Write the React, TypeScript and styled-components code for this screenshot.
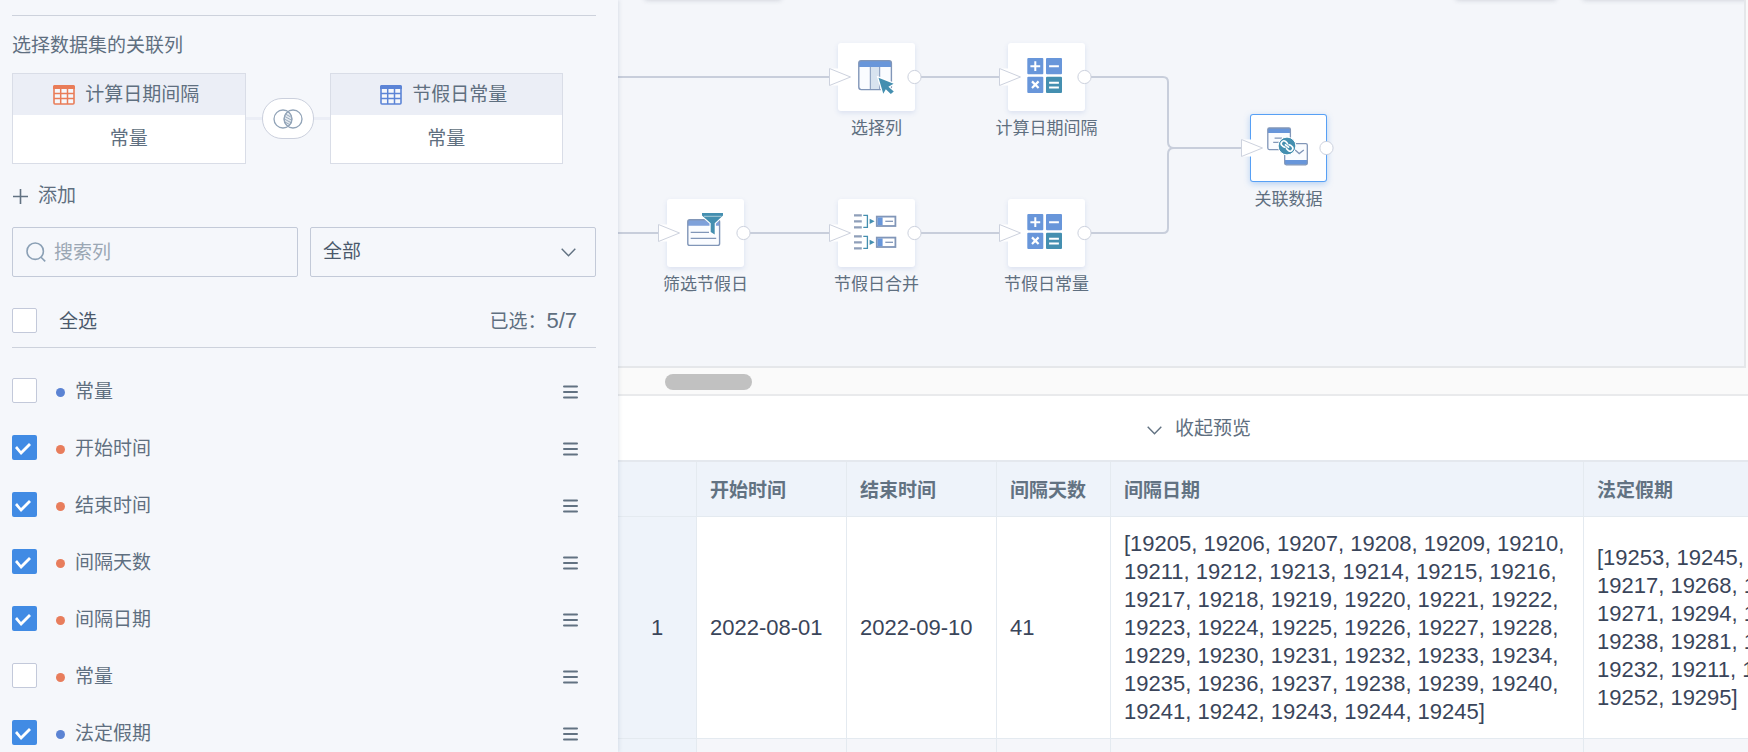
import React, { useState } from "react";
import styled, { createGlobalStyle } from "styled-components";

const GlobalStyle = createGlobalStyle`
  * { box-sizing: border-box; }
  body {
    margin: 0;
    background: #f5f7fb;
    color: #5f6f80;
    font-family: "Liberation Sans", "Noto Sans CJK SC", sans-serif;
    font-size: 19px;
    line-height: 28px;
  }
  button, input, select { font: inherit; color: inherit; }
`;

const Page = styled.div`
  display: flex;
  height: 100vh;
  overflow: hidden;
`;

/* ---------- Side panel ---------- */

const SidePanel = styled.aside`
  position: relative;
  z-index: 1;
  flex: 0 0 618px;
  padding: 15px 22px 0 12px;
  background: #f5f7fb;
  box-shadow: 1px 0 4px rgba(70, 90, 120, 0.14);
`;

const PanelTitle = styled.h2`
  margin: 0 0 13px;
  padding-top: 16px;
  border-top: 1px solid #cdd2dc;
  font-size: 19px;
  line-height: 28px;
  font-weight: 400;
`;

const JoinRow = styled.div`
  display: flex;
  align-items: center;
  padding-right: 33px;
`;

const DataSetCard = styled.section`
  flex: 1;
  min-width: 0;
  border: 1px solid #d9dde7;
  background: #fff;
  text-align: center;
`;

const DataSetHead = styled.header`
  display: flex;
  align-items: center;
  justify-content: center;
  gap: 10px;
  height: 41px;
  padding-right: 5px;
  background: #ebeef6;
`;

const DataSetColumn = styled.div`
  height: 48px;
  line-height: 48px;
`;

const JoinLink = styled.div`
  display: flex;
  flex: 0 0 84px;
  align-items: center;

  &::before,
  &::after {
    content: "";
    flex: 1;
    height: 3px;
    background: #ebeef6;
  }
`;

const JoinButton = styled.button`
  display: flex;
  align-items: center;
  justify-content: center;
  width: 52px;
  height: 41px;
  padding: 0;
  border: 1px solid #cbd0dd;
  border-radius: 20px;
  background: #fff;
`;

const AddButton = styled.button`
  display: flex;
  align-items: center;
  gap: 10px;
  margin: 18px 0 17px;
  padding: 0 0 0 1px;
  border: 0;
  background: none;
`;

const FilterRow = styled.div`
  display: flex;
  gap: 12px;
`;

const Field = styled.div`
  display: flex;
  flex: 1 1 0;
  align-items: center;
  position: relative;
  min-width: 0;
  height: 50px;
  border: 1px solid #c3cad8;
  border-radius: 2px;
`;

const SearchInput = styled.input`
  flex: 1;
  min-width: 0;
  height: 48px;
  padding: 2px 12px 0 8px;
  border: 0;
  outline: 0;
  background: none;

  &::placeholder { color: #9ba7b4; opacity: 1; }
`;

const SearchLabel = styled.label`
  display: flex;
  padding-left: 13px;
`;

const TypeSelect = styled.select`
  flex: 1;
  min-width: 0;
  height: 48px;
  padding: 0 40px 0 12px;
  border: 0;
  outline: 0;
  background: none;
  color: #4b596b;
  appearance: none;
`;

const SelectArrow = styled.span`
  display: flex;
  position: absolute;
  right: 19px;
  pointer-events: none;
`;

const SelectAllRow = styled.div`
  display: flex;
  align-items: center;
  justify-content: space-between;
  height: 54px;
  margin-top: 17px;
  padding-right: 19px;
  border-bottom: 1px solid #cdd2dc;
`;

const SelectAllLabel = styled.label`
  display: flex;
  align-items: center;
  gap: 22px;
  color: #4b596b;
`;

const LabelText = styled.span`
  padding-top: 3px;
`;

const SelectedCount = styled.span`
  padding-top: 2px;

  b { font-size: 22px; font-weight: 400; }
`;

const ColumnList = styled.ul`
  margin: 0;
  padding: 14px 18px 0 0;
  list-style: none;
`;

const ColumnItem = styled.li`
  display: flex;
  align-items: center;
  justify-content: space-between;
  height: 57px;
`;

const ColumnLabel = styled.label`
  display: flex;
  align-items: center;
`;

const Checkbox = styled.input.attrs({ type: "checkbox" })`
  flex: none;
  width: 25px;
  height: 25px;
  margin: 0;
  border: 1px solid #c3c9da;
  border-radius: 2px;
  background: #fff;
  appearance: none;

  &:checked {
    border: 0;
    background: #418be4;
  }

  &:checked::after {
    content: "";
    display: block;
    width: 25px;
    height: 25px;
    background: #fff;
    clip-path: polygon(3px 13px, 5px 11px, 9px 16px, 17px 8px, 19px 10px, 9px 20px);
  }
`;

const Dot = styled.span<{ $color: string }>`
  width: 9px;
  height: 9px;
  margin: 3px 10px 0 19px;
  border-radius: 50%;
  background: ${(p) => p.$color};
`;

const DragButton = styled.button`
  display: flex;
  padding: 3px 0 0;
  border: 0;
  background: none;
`;

/* ---------- Work area ---------- */

const WorkArea = styled.main`
  display: flex;
  flex: 1;
  flex-direction: column;
  min-width: 0;
  background: #fafafa;
`;

const Canvas = styled.div`
  position: relative;
  flex: 0 0 368px;
  margin-right: 2px;
  overflow: hidden;
  border: solid #e5e7ea;
  border-width: 0 2px 2px 0;
  background: #f4f6fa;
`;

const FloatingBar = styled.div<{ $left: number; $width: number }>`
  position: absolute;
  top: -40px;
  left: ${(p) => p.$left}px;
  width: ${(p) => p.$width}px;
  height: 40px;
  box-shadow: 0 0 5px rgba(50, 60, 80, 0.22);
`;

const Edges = styled.svg`
  position: absolute;
  top: 0;
  left: 0;
`;

const NodeBox = styled.button<{ $left: number; $top: number; $active?: boolean }>`
  position: absolute;
  top: ${(p) => p.$top}px;
  left: ${(p) => p.$left}px;
  width: 77px;
  height: 68px;
  padding: 0;
  border: 0;
  border-radius: 3px;
  background: #fff;
  box-shadow: ${(p) =>
    p.$active
      ? "inset 0 0 0 1px #57a0f5, 0 2px 6px rgba(65, 139, 228, 0.35)"
      : "0 2px 5px rgba(90, 120, 190, 0.16)"};
`;

const NodeArt = styled.svg`
  position: absolute;
  top: 0;
  left: -10px;
`;

const NodeLabel = styled.span`
  position: absolute;
  top: 76px;
  left: 50%;
  transform: translateX(-50%);
  font-size: 17px;
  line-height: 20px;
  white-space: nowrap;
`;

const ScrollTrack = styled.div`
  flex: none;
  padding: 6px 47px 4px;
  border-bottom: 2px solid #e9eaec;
`;

const ScrollThumb = styled.div`
  width: 87px;
  height: 16px;
  border-radius: 8px;
  background: #c1c1c1;
`;

const PreviewBar = styled.div`
  display: flex;
  flex: 0 0 66px;
  align-items: center;
  justify-content: center;
  padding: 2px 0 0 32px;
  border-bottom: 2px solid #e4e8ee;
  background: #fff;
`;

const PreviewToggle = styled.button`
  display: flex;
  align-items: center;
  gap: 13px;
  padding: 0;
  border: 0;
  background: none;

  svg { margin-top: 2px; }
`;

const TableScroll = styled.div`
  flex: 1;
  min-height: 0;
  overflow: hidden;
  background: #f5f6fa;
`;

const DataTable = styled.table`
  width: 1220px;
  table-layout: fixed;
  border-collapse: separate;
  border-spacing: 0;
  color: #3a455a;
  font-size: 22px;
`;

const HeadCell = styled.th`
  height: 55px;
  padding: 3px 13px 0;
  border: solid #e4eaf0;
  border-width: 0 1px 1px 0;
  background: #eef3fa;
  color: #627282;
  font-size: 19px;
  text-align: left;
`;

const IndexCell = styled.th`
  border: solid #e4eaf0;
  border-width: 0 1px 1px 0;
  background: #eef3fa;
  font-weight: 400;
  text-align: center;
`;

const Cell = styled.td`
  padding: 13px 13px 12px;
  border: solid #e4eaf0;
  border-width: 0 1px 1px 0;
  background: #fff;
`;

const NextCell = styled(Cell)`
  height: 222px;
  background: #f5f6fa;
`;

/* ---------- Icons ---------- */

const BLUE = "#6896da";
const SLATE = "#8196b8";
const TEAL = "#448fb0";
const PORT = "#cdd2de";

const TableIcon = ({ color }: { color: string }) => (
  <svg width="22" height="20" viewBox="0 0 22 20">
    <rect x="1" y="1" width="20" height="18" rx="1" fill="#fff" fillOpacity=".5" stroke={color} strokeWidth="1.6" />
    <path d="M0 1.5Q0 0 1.5 0H20.5Q22 0 22 1.5V4H0Z" fill={color} />
    <path d="M1 8.5H21M1 13.5H21M7.7 3V19M14.5 3V19" stroke={color} strokeWidth="1.5" />
  </svg>
);

const JoinIcon = () => (
  <svg width="30" height="20" viewBox="0 0 30 20" fill="none" stroke="#92a4b8">
    <path d="M15 2.7A9 9 0 0 1 15 17.3A9 9 0 0 1 15 2.7Z" fill="#e3e9ef" />
    <path d="M12.4 5L17.8 8M11.5 7.3L18.6 11.2M11.3 10L18.3 13.8M12 13L17 15.8" strokeWidth=".9" />
    <circle cx="10" cy="10" r="9" strokeWidth="1.3" />
    <circle cx="20" cy="10" r="9" strokeWidth="1.3" />
  </svg>
);

const PlusIcon = () => (
  <svg width="15" height="15" viewBox="0 0 15 15">
    <path d="M0 7.5H15M7.5 0V15" stroke="#627282" strokeWidth="1.6" />
  </svg>
);

const SearchIcon = () => (
  <svg width="20" height="20" viewBox="0 0 20 20" fill="none" stroke="#8ba0b5" strokeWidth="1.6">
    <circle cx="9.2" cy="9.2" r="8.2" />
    <path d="M14.8 15L19.2 19.4" />
  </svg>
);

const ChevronDown = () => (
  <svg width="15" height="9" viewBox="0 0 15 9" fill="none" stroke="#627282" strokeWidth="1.4">
    <path d="M.7 .7L7.5 7.8L14.3 .7" />
  </svg>
);

const DragIcon = () => (
  <svg width="15" height="14" viewBox="0 0 15 14" stroke="#627282" strokeWidth="2" strokeLinecap="round">
    <path d="M1 1.5H14M1 7H14M1 12.5H14" />
  </svg>
);

const SelectColumnsArt = () => (
  <g>
    <rect x="20.8" y="17.6" width="32.6" height="29" rx="2.5" fill="#fafcff" />
    <rect x="32.3" y="23" width="9.4" height="23.6" fill="#d8e3ef" />
    <path d="M20.8 24V19.6Q20.8 17.6 22.8 17.6H51.4Q53.4 17.6 53.4 19.6V24Z" fill={BLUE} />
    <path d="M32.3 24V46.6M41.7 24V46.6" stroke={SLATE} strokeWidth="1" />
    <rect x="20.8" y="17.6" width="32.6" height="29" rx="2.5" fill="none" stroke={SLATE} strokeWidth="1.4" />
    <path d="M40.5 34.7L55.6 40.8L50.4 43.8L55.8 48.6L52.8 51L47.8 46.2L45.3 50.8Z" fill={TEAL} stroke="#fff" strokeWidth="2.4" paintOrder="stroke" />
  </g>
);

const CalculateArt = () => (
  <g stroke="#fff" strokeWidth="2">
    <g stroke="none">
      <rect x="19.3" y="15" width="16" height="16.3" rx="1" fill={BLUE} />
      <rect x="38" y="15" width="16" height="16.3" rx="1" fill={BLUE} />
      <rect x="19.3" y="33.8" width="16" height="16.3" rx="1" fill={BLUE} />
      <rect x="38" y="33.8" width="16" height="16.3" rx="1" fill={TEAL} />
    </g>
    <path d="M22.4 23.2H32.2M27.3 18.3V28.1M41.1 23.2H50.9" />
    <path d="M24 38.4L30.6 45M30.6 38.4L24 45" strokeWidth="2.2" />
    <path d="M41.1 39.7H50.9M41.1 44.4H50.9" />
  </g>
);

const FilterArt = () => (
  <g>
    <rect x="20.8" y="20.8" width="31.8" height="25.6" rx="2" fill="#fafcff" />
    <path d="M20.8 26.7V22.8Q20.8 20.8 22.8 20.8H50.6Q52.6 20.8 52.6 22.8V26.7Z" fill="#7ea1da" />
    <rect x="20.8" y="20.8" width="31.8" height="25.6" rx="2" fill="none" stroke={SLATE} strokeWidth="1.4" />
    <path d="M23.7 33.4H42M23.7 39.3H49.2" stroke={SLATE} strokeWidth="1.3" />
    <path d="M35 14H56V16.5L47.7 24.2V35.6L43.7 33V24.2L35 16.5Z" fill={TEAL} stroke="#fff" strokeWidth="2.4" paintOrder="stroke" />
    <path d="M37 17.3H54.5" stroke="#a9cbd9" strokeWidth="1" />
  </g>
);

const MergeRowArt = ({ y }: { y: number }) => (
  <g transform={`translate(0 ${y})`}>
    <path d="M16 1H23.8M16 7H23.8M16 13H23.8" stroke="#8f9fb9" strokeWidth="2.2" />
    <path d="M25.3 1H29.4V13H25.3" fill="none" stroke={TEAL} strokeWidth="1.3" />
    <path d="M31.6 4.4L36.6 7L31.6 9.6Z" fill={TEAL} />
    <rect x="38.8" y="2.3" width="18.6" height="9.4" fill="#fff" stroke={SLATE} strokeWidth="1.8" />
    <rect x="39.6" y="3.1" width="5" height="7.8" fill={BLUE} />
    <path d="M47.3 7H55" stroke={SLATE} strokeWidth="1.3" />
  </g>
);

const MergeArt = () => (
  <g>
    <MergeRowArt y={15.3} />
    <MergeRowArt y={36.3} />
  </g>
);

const JoinDataArt = () => (
  <g>
    <rect x="17.8" y="14" width="22.6" height="21.6" rx="1.5" fill="#fafcff" />
    <path d="M17.8 19V15.5Q17.8 14 19.3 14H38.9Q40.4 14 40.4 15.5V19Z" fill={BLUE} />
    <rect x="17.8" y="14" width="22.6" height="21.6" rx="1.5" fill="none" stroke={SLATE} strokeWidth="1.3" />
    <path d="M24.6 24.2H32M23.2 28.4H30" stroke={SLATE} strokeWidth="1.3" />
    <rect x="34.7" y="29.6" width="22.6" height="21.2" rx="1.5" fill="#fafcff" stroke="#fff" strokeWidth="3" />
    <path d="M34.7 46H57.3V49.3Q57.3 50.8 55.8 50.8H36.2Q34.7 50.8 34.7 49.3Z" fill={BLUE} />
    <rect x="34.7" y="29.6" width="22.6" height="21.2" rx="1.5" fill="none" stroke={SLATE} strokeWidth="1.3" />
    <path d="M44.6 35.6L49.2 39.6L53.8 36" fill="none" stroke={SLATE} strokeWidth="1.3" />
    <circle cx="37" cy="32" r="8.9" fill={TEAL} stroke="#fff" strokeWidth="1" />
    <g fill="none" stroke="#fff" strokeWidth="1.6" transform="rotate(38 37 32)">
      <path d="M36.4 30.5Q36 29.3 34.4 29.3H33Q30.4 29.3 30.4 32T33 34.7H34.4Q36 34.7 36.4 33.5" />
      <path d="M37.6 33.5Q38 34.7 39.6 34.7H41Q43.6 34.7 43.6 32T41 29.3H39.6Q38 29.3 37.6 30.5" />
      <path d="M34.3 32H39.7" />
    </g>
  </g>
);

/* ---------- Data ---------- */

const ORANGE_DOT = "#e87d5c";
const BLUE_DOT = "#5b83d3";

const initialColumns = [
  { name: "常量", color: BLUE_DOT, checked: false },
  { name: "开始时间", color: ORANGE_DOT, checked: true },
  { name: "结束时间", color: ORANGE_DOT, checked: true },
  { name: "间隔天数", color: ORANGE_DOT, checked: true },
  { name: "间隔日期", color: ORANGE_DOT, checked: true },
  { name: "常量", color: ORANGE_DOT, checked: false },
  { name: "法定假期", color: BLUE_DOT, checked: true },
];

const nodes = [
  { label: "选择列", left: 220, top: 43, Art: SelectColumnsArt },
  { label: "计算日期间隔", left: 390, top: 43, Art: CalculateArt },
  { label: "筛选节假日", left: 49, top: 199, Art: FilterArt },
  { label: "节假日合并", left: 220, top: 199, Art: MergeArt },
  { label: "节假日常量", left: 390, top: 199, Art: CalculateArt },
  { label: "关联数据", left: 632, top: 114, Art: JoinDataArt, active: true },
];

const intervalDates = `[${Array.from({ length: 41 }, (_, i) => 19205 + i).join(", ")}]`;

const holidays =
  "[19253, 19245, 19246, 19217, 19268, 19260, 19271, 19294, 19274, 19238, 19281, 19288, 19232, 19211, 19218, 19252, 19295]";

export default function App() {
  const [columns, setColumns] = useState(initialColumns);
  const selected = columns.filter((c) => c.checked).length;
  const toggle = (index: number) =>
    setColumns(columns.map((c, i) => (i === index ? { ...c, checked: !c.checked } : c)));
  const toggleAll = () => {
    const next = selected !== columns.length;
    setColumns(columns.map((c) => ({ ...c, checked: next })));
  };

  return (
    <>
      <GlobalStyle />
      <Page>
        <SidePanel>
          <PanelTitle>选择数据集的关联列</PanelTitle>
          <JoinRow>
            <DataSetCard>
              <DataSetHead>
                <TableIcon color="#e97c58" />
                计算日期间隔
              </DataSetHead>
              <DataSetColumn>常量</DataSetColumn>
            </DataSetCard>
            <JoinLink>
              <JoinButton type="button">
                <JoinIcon />
              </JoinButton>
            </JoinLink>
            <DataSetCard>
              <DataSetHead>
                <TableIcon color="#5c84d6" />
                节假日常量
              </DataSetHead>
              <DataSetColumn>常量</DataSetColumn>
            </DataSetCard>
          </JoinRow>

          <AddButton type="button">
            <PlusIcon />
            添加
          </AddButton>

          <FilterRow>
            <Field>
              <SearchLabel htmlFor="column-search">
                <SearchIcon />
              </SearchLabel>
              <SearchInput id="column-search" type="text" placeholder="搜索列" />
            </Field>
            <Field>
              <TypeSelect defaultValue="all" aria-label="全部">
                <option value="all">全部</option>
              </TypeSelect>
              <SelectArrow>
                <ChevronDown />
              </SelectArrow>
            </Field>
          </FilterRow>

          <SelectAllRow>
            <SelectAllLabel>
              <Checkbox checked={selected === columns.length} onChange={toggleAll} />
              <LabelText>全选</LabelText>
            </SelectAllLabel>
            <SelectedCount>
              已选：<b>{`${selected}/${columns.length}`}</b>
            </SelectedCount>
          </SelectAllRow>

          <ColumnList>
            {columns.map((column, i) => (
              <ColumnItem key={i}>
                <ColumnLabel>
                  <Checkbox checked={column.checked} onChange={() => toggle(i)} />
                  <Dot $color={column.color} />
                  <LabelText>{column.name}</LabelText>
                </ColumnLabel>
                <DragButton type="button">
                  <DragIcon />
                </DragButton>
              </ColumnItem>
            ))}
          </ColumnList>
        </SidePanel>

        <WorkArea>
          <Canvas>
            <FloatingBar $left={27} $width={136} />
            <FloatingBar $left={838} $width={100} />
            <FloatingBar $left={965} $width={200} />
            <Edges width="700" height="366" fill="none" stroke="#c8cedb" strokeWidth="2">
              <path d="M0 77H390M467 77H545Q550 77 550 82V142Q550 148 556 148H630" />
              <path d="M0 233H390M467 233H545Q550 233 550 228V154Q550 148 556 148" />
            </Edges>
            {nodes.map(({ label, left, top, Art, active }) => (
              <NodeBox key={label} type="button" $left={left} $top={top} $active={active}>
                <NodeArt width="96" height="68" viewBox="-10 0 96 68">
                  <Art />
                  <rect x="-9" y="25.5" width="17" height="17" fill="#fff" />
                  <path d="M-8.5 25.5L12.5 34L-8.5 42.5Z" fill="#fff" stroke={PORT} />
                  <circle cx="76.5" cy="34" r="6.6" fill="#fff" stroke={PORT} />
                </NodeArt>
                <NodeLabel>{label}</NodeLabel>
              </NodeBox>
            ))}
          </Canvas>
          <ScrollTrack>
            <ScrollThumb />
          </ScrollTrack>
          <PreviewBar>
            <PreviewToggle type="button">
              <ChevronDown />
              收起预览
            </PreviewToggle>
          </PreviewBar>
          <TableScroll>
            <DataTable>
              <colgroup>
                <col style={{ width: 79 }} />
                <col style={{ width: 150 }} />
                <col style={{ width: 150 }} />
                <col style={{ width: 114 }} />
                <col style={{ width: 473 }} />
                <col />
              </colgroup>
              <thead>
                <tr>
                  <HeadCell />
                  <HeadCell>开始时间</HeadCell>
                  <HeadCell>结束时间</HeadCell>
                  <HeadCell>间隔天数</HeadCell>
                  <HeadCell>间隔日期</HeadCell>
                  <HeadCell>法定假期</HeadCell>
                </tr>
              </thead>
              <tbody>
                <tr>
                  <IndexCell>1</IndexCell>
                  <Cell>2022-08-01</Cell>
                  <Cell>2022-09-10</Cell>
                  <Cell>41</Cell>
                  <Cell>{intervalDates}</Cell>
                  <Cell>{holidays}</Cell>
                </tr>
                <tr>
                  <IndexCell />
                  <NextCell />
                  <NextCell />
                  <NextCell />
                  <NextCell />
                  <NextCell />
                </tr>
              </tbody>
            </DataTable>
          </TableScroll>
        </WorkArea>
      </Page>
    </>
  );
}
